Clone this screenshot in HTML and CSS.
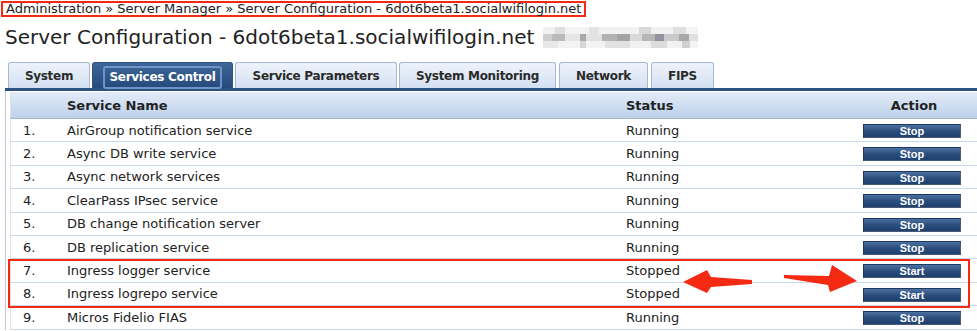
FILE: index.html
```html
<!DOCTYPE html>
<html lang="en">
<head>
    <meta charset="UTF-8">
    <title>Server Configuration</title>
    <link rel="stylesheet" href="styles.css">
</head>
<body>
    <div class="crumb">Administration &raquo; Server Manager &raquo; Server Configuration - 6dot6beta1.socialwifilogin.net</div>
    <h1 class="title">Server Configuration - 6dot6beta1.socialwifilogin.net <span class="blur"></span></h1>

    <div class="tabs">
        <div class="tab t-system">System</div>
        <div class="tab t-control active"><span>Services Control</span></div>
        <div class="tab t-params">Service Parameters</div>
        <div class="tab t-monitor">System Monitoring</div>
        <div class="tab t-network">Network</div>
        <div class="tab t-fips">FIPS</div>
    </div>

    <div class="panel">
        <table class="services">
            <thead>
                <tr>
                    <th class="num"></th>
                    <th class="name">Service Name</th>
                    <th class="status">Status</th>
                    <th class="action">Action</th>
                </tr>
            </thead>
            <tbody>
                <tr><td class="num">1.</td><td>AirGroup notification service</td><td>Running</td><td class="action"><button class="btn">Stop</button></td></tr>
                <tr><td class="num">2.</td><td>Async DB write service</td><td>Running</td><td class="action"><button class="btn">Stop</button></td></tr>
                <tr><td class="num">3.</td><td>Async network services</td><td>Running</td><td class="action"><button class="btn">Stop</button></td></tr>
                <tr><td class="num">4.</td><td>ClearPass IPsec service</td><td>Running</td><td class="action"><button class="btn">Stop</button></td></tr>
                <tr><td class="num">5.</td><td>DB change notification server</td><td>Running</td><td class="action"><button class="btn">Stop</button></td></tr>
                <tr><td class="num">6.</td><td>DB replication service</td><td>Running</td><td class="action"><button class="btn">Stop</button></td></tr>
                <tr><td class="num">7.</td><td>Ingress logger service</td><td>Stopped</td><td class="action"><button class="btn">Start</button></td></tr>
                <tr><td class="num">8.</td><td>Ingress logrepo service</td><td>Stopped</td><td class="action"><button class="btn">Start</button></td></tr>
                <tr><td class="num">9.</td><td>Micros Fidelio FIAS</td><td>Running</td><td class="action"><button class="btn">Stop</button></td></tr>
            </tbody>
        </table>
    </div>

    <!-- annotation over rows 7 and 8 -->
    <div class="mark"></div>
    <svg class="arrows" width="977" height="331" viewBox="0 0 977 331">
        <polygon points="752,280 711,277 707,270 683,282 707,293 711,287 752,284" fill="#f42a12"/>
        <polygon points="784,275 829,276 832,265 857,281 830,292 828,285 784,278" fill="#f42a12"/>
    </svg>
</body>
</html>
```

FILE: styles.css
```css
body {
    margin: 0;
    font-family: "DejaVu Sans", Verdana, sans-serif;
    color: #222;
    position: relative;
    overflow: hidden;
}

.crumb {
    width: fit-content;
    margin: 1px 0 0 1px;
    padding: 0 3px;
    border: 2px solid #f42a12;
    font-size: 13px;
    line-height: 12px;
    color: #222;
}

.title {
    margin: 8px 0 0 5px;
    font-size: 20px;
    font-weight: normal;
    line-height: 24px;
    color: #222;
}

/* pixelated blur next to the host name */
.blur {
    display: inline-block;
    vertical-align: -4px;
    width: 155px;
    height: 21px;
    margin-left: 2px;
    background:
        linear-gradient(to right, #f1f1f1 0 8%, #dedede 8% 14%, #f3f3f3 14% 30%, #e3e3e3 30% 36%, #f2f2f2 36% 62%, #d9d9d9 62% 70%, #f1f1f1 70% 84%, #dfdfdf 84% 92%, #f4f4f4 92%) 0 0 / 100% 7px no-repeat,
        linear-gradient(to right, #cfcfcf 0 6%, #bababa 6% 14%, #e6e6e6 14% 24%, #a9a9a9 24% 28%, #e2e2e2 28% 38%, #b3b3b3 38% 48%, #a4a4a4 48% 56%, #dadada 56% 64%, #b6b6b6 64% 72%, #9293a0 72% 78%, #cacaca 78% 88%, #a9a9a9 88% 94%, #e0e0e0 94%) 0 7px / 100% 7px no-repeat,
        linear-gradient(to right, #e8e8e8 0 10%, #f3f3f3 10% 24%, #d6d6d6 24% 28%, #f3f3f3 28% 40%, #e2e2e2 40% 56%, #f1f1f1 56% 70%, #dcdcdc 70% 80%, #f2f2f2 80% 90%, #d1d1d1 90% 95%, #f4f4f4 95%) 0 14px / 100% 7px no-repeat;
}

.tabs {
    display: flex;
    margin: 13px 0 0 5px;
    padding-left: 3px;
    border-bottom: 3px solid #2d5385;
}
.tab {
    box-sizing: border-box;
    height: 26px;
    margin-right: 2px;
    border: 1px solid #a7b8d2;
    border-bottom: none;
    border-radius: 3px 3px 0 0;
    background: linear-gradient(to bottom, #eef3fb, #d3e0f2);
    font-size: 12px;
    font-weight: bold;
    line-height: 27px;
    letter-spacing: -0.3px;
    white-space: nowrap;
    text-align: center;
    color: #2a2a2a;
}
.t-system { width: 82px; }
.t-control { width: 141px; }
.t-params { width: 162px; }
.t-monitor { width: 157px; margin-right: 3px; }
.t-network { width: 89px; margin-right: 3px; }
.t-fips { width: 63px; }
.tab.active {
    padding: 3px 10px 0;
    border-color: #2d5385;
    background: linear-gradient(to bottom, #3f6799, #25497a);
    color: #fff;
}
.tab.active span {
    display: block;
    height: 19px;
    border: 2px solid #6e95c9;
    border-radius: 3px;
    line-height: 19px;
}

.panel {
    margin-left: 5px;
    padding: 1px 0 0 4px;
    border-left: 1px solid #c4c8ce;
}

.services {
    width: 968px;
    border-collapse: collapse;
    font-size: 13px;
    border-left: 1px solid #dde4ee;
}
.services th {
    height: 26px;
    padding: 0;
    border-bottom: 1px solid #a9b7c8;
    background: linear-gradient(to bottom, #e3ecf8, #bcd1ea);
    font-weight: bold;
    text-align: left;
    color: #222;
}
.services td {
    height: 22.4px;
    padding: 0;
    border-bottom: 1px solid #cad8ee;
    color: #222;
}
.services .num {
    width: 44px;
    padding-left: 12px;
}
.services .name {
    width: 559px;
}
.services th.status {
    width: 230px;
}
.services .action {
    text-align: center;
    padding-right: 10px;
}
.services th.action {
    padding-left: 4px;
}

.btn {
    display: inline-block;
    width: 98px;
    height: 14px;
    padding: 0;
    border: 1px solid #1c3862;
    border-right-color: #485b73;
    border-bottom-color: #485b73;
    background: linear-gradient(to bottom, #4c70a0, #2a4d7e 50%, #1f4070);
    font-family: "Liberation Sans", Arial, sans-serif;
    font-size: 11px;
    font-weight: bold;
    line-height: 12px;
    color: #fff;
    vertical-align: middle;
}

.mark {
    position: absolute;
    left: 8px;
    top: 259px;
    width: 958px;
    height: 45px;
    border: 2px solid #f42a12;
}
.arrows {
    position: absolute;
    left: 0;
    top: 0;
    pointer-events: none;
}
```
